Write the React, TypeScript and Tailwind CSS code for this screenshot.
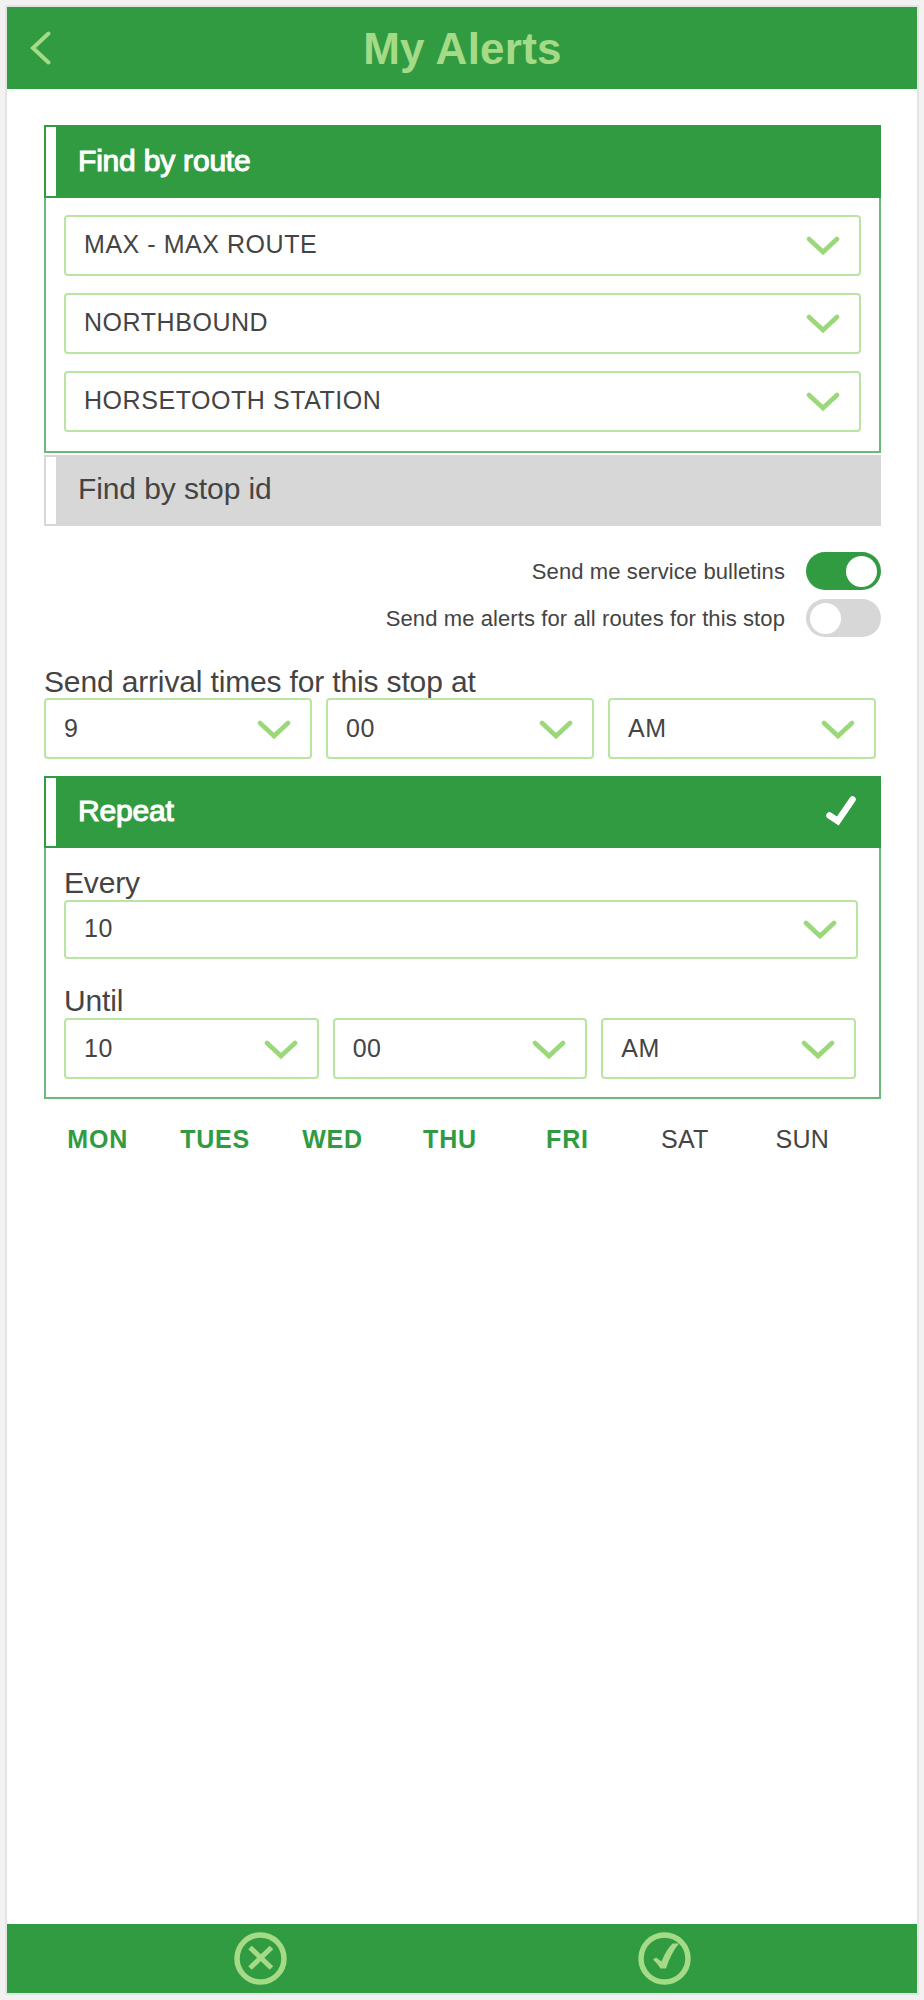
import React, { useState } from 'react';
import clsx from 'clsx';

const routeFilters = [
  { id: 'route', value: 'MAX - MAX ROUTE' },
  { id: 'direction', value: 'NORTHBOUND' },
  { id: 'stop', value: 'HORSETOOTH STATION' },
];

const arrivalTime = ['9', '00', 'AM'];
const untilTime = ['10', '00', 'AM'];

const days = ['MON', 'TUES', 'WED', 'THU', 'FRI', 'SAT', 'SUN'];

function SelectBox({ value, className = 'h-[61px] pb-[2px]' }: { value: string; className?: string }) {
  return (
    <button
      type="button"
      className={clsx(
        'flex w-full items-center justify-between rounded-[4px] border-2 border-[#b9e4a1] bg-white pl-[18px] pr-[19px] text-left',
        className
      )}
    >
      <span className="text-[25px] leading-[30px] tracking-[0.55px] text-[#444444]">{value}</span>
      <svg className="mt-[4px] h-[20px] w-[34px]" viewBox="0 0 34 20" fill="none">
        <path d="M3 3L17 16L31 3" stroke="#9bd87a" strokeWidth="4.6" strokeLinecap="round" />
      </svg>
    </button>
  );
}

function PanelHeader({ title, checked = false, className }: { title: string; checked?: boolean; className: string }) {
  return (
    <div className={clsx('flex border-2 border-[#319b42] bg-[#319b42]', className)}>
      <div className="w-[10px] bg-white" />
      <div className="flex flex-1 items-center justify-between pb-[2px] pl-[22px] pr-[22px]">
        <h2 className="text-[30px] leading-[36px] tracking-[-0.2px] text-white [-webkit-text-stroke:1.1px_white]">
          {title}
        </h2>
        {checked && (
          <svg className="h-[32px] w-[32px]" viewBox="0 0 32 32" fill="none">
            <path d="M4.5 20.5L12.8 26L27.5 4.5" stroke="white" strokeWidth="6.6" strokeLinecap="round" />
          </svg>
        )}
      </div>
    </div>
  );
}

function Toggle({ label, on, onChange }: { label: string; on: boolean; onChange: () => void }) {
  return (
    <div className="flex h-[38px] items-center justify-end gap-[21px]">
      <span className="pt-[2px] text-[22px] leading-[26px] tracking-[0.1px] text-[#444444]">{label}</span>
      <button
        type="button"
        role="switch"
        aria-checked={on}
        aria-label={label}
        onClick={onChange}
        className={clsx(
          'flex h-[38px] w-[75px] items-center rounded-full px-[4px]',
          on ? 'justify-end bg-[#319b42]' : 'justify-start bg-[#d7d7d7]'
        )}
      >
        <span className="h-[31px] w-[31px] rounded-full bg-white" />
      </button>
    </div>
  );
}

export default function App() {
  const [bulletins, setBulletins] = useState(true);
  const [allRoutes, setAllRoutes] = useState(false);
  const [selectedDays, setSelectedDays] = useState(['MON', 'TUES', 'WED', 'THU', 'FRI']);

  const toggleDay = (day: string) => {
    setSelectedDays((prev) => (prev.includes(day) ? prev.filter((d) => d !== day) : [...prev, day]));
  };

  return (
    <div className="h-[2000px] w-[924px] bg-[#f2f2f2] p-[7px] font-['Liberation_Sans',Arial,sans-serif]">
      <div className="flex h-[1986px] w-[910px] flex-col bg-white shadow-[0_0_0_2px_#e4e4e4]">
        {/* Header */}
        <header className="grid h-[82px] shrink-0 grid-cols-[60px_1fr_60px] items-center bg-[#319b42]">
          <button type="button" aria-label="Back" className="pl-[22px]">
            <svg className="h-[34px] w-[22px]" viewBox="0 0 22 34" fill="none">
              <path d="M19.5 2.5L4 17L19.5 31.5" stroke="#a5db86" strokeWidth="4" strokeLinecap="round" />
            </svg>
          </button>
          <h1 className="pl-px pt-px text-center text-[44px] font-bold leading-[50px] tracking-[0.25px] text-[#a5db86]">
            My Alerts
          </h1>
        </header>

        <main className="flex-1 pl-[37px] pr-[36px] pt-[36px]">
          {/* Find by route */}
          <section>
            <PanelHeader title="Find by route" className="h-[73px]" />
            <div className="flex flex-col gap-[17px] border-x-2 border-b-2 border-[#6cb87a] pb-[19px] pl-[18px] pr-[18px] pt-[17px]">
              {routeFilters.map((filter) => (
                <SelectBox key={filter.id} value={filter.value} className="h-[61px] pb-[3px]" />
              ))}
            </div>
          </section>

          {/* Find by stop id */}
          <div className="mt-[2px] flex h-[71px] border-2 border-[#d7d7d7] bg-[#d7d7d7]">
            <div className="w-[10px] bg-white" />
            <h2 className="flex items-center pb-[4px] pl-[22px] text-[30px] leading-[36px] tracking-[-0.1px] text-[#444444]">
              Find by stop id
            </h2>
          </div>

          {/* Notification switches */}
          <div className="mt-[26px] flex flex-col gap-[9px]">
            <Toggle label="Send me service bulletins" on={bulletins} onChange={() => setBulletins(!bulletins)} />
            <Toggle
              label="Send me alerts for all routes for this stop"
              on={allRoutes}
              onChange={() => setAllRoutes(!allRoutes)}
            />
          </div>

          {/* Arrival time */}
          <p className="mt-[28px] text-[30px] leading-[33px] tracking-[-0.15px] text-[#444444]">
            Send arrival times for this stop at
          </p>
          <div className="grid w-[832px] grid-cols-3 gap-[14px]">
            {arrivalTime.map((value) => (
              <SelectBox key={value} value={value} />
            ))}
          </div>

          {/* Repeat */}
          <section className="mt-[17px]">
            <PanelHeader title="Repeat" checked className="h-[72px]" />
            <div className="border-x-2 border-b-2 border-[#6cb87a] pb-[18px] pl-[18px] pt-[18px]">
              <p className="text-[30px] leading-[34px] tracking-[-0.15px] text-[#444444]">Every</p>
              <div className="w-[794px]">
                <SelectBox value="10" className="h-[59px] pb-[3px]" />
              </div>
              <p className="mt-[25px] text-[30px] leading-[34px] tracking-[-0.15px] text-[#444444]">Until</p>
              <div className="grid w-[792px] grid-cols-3 gap-[14px]">
                {untilTime.map((value) => (
                  <SelectBox key={value} value={value} />
                ))}
              </div>
            </div>
          </section>

          {/* Days of the week */}
          <div className="-ml-[5px] mt-[25px] grid w-[822px] grid-cols-7">
            {days.map((day) => (
              <button
                key={day}
                type="button"
                onClick={() => toggleDay(day)}
                className={clsx(
                  'text-center text-[25px] leading-[30px]',
                  selectedDays.includes(day) ? 'font-bold tracking-[0.8px] text-[#319b42]' : 'tracking-[0.3px] text-[#444444]'
                )}
              >
                {day}
              </button>
            ))}
          </div>
        </main>

        {/* Footer actions */}
        <footer className="flex h-[69px] shrink-0 items-center gap-[351px] bg-[#319b42] pb-px pl-[227px]">
          <button type="button" aria-label="Cancel">
            <svg className="h-[53px] w-[53px]" viewBox="0 0 53 53" fill="none" stroke="#a5db86">
              <circle cx="26.5" cy="26.5" r="23.5" strokeWidth="5.5" />
              <path d="M16 15.5L37.5 36M37.5 15.5L16 36" strokeWidth="5" />
            </svg>
          </button>
          <button type="button" aria-label="Save">
            <svg className="h-[53px] w-[53px]" viewBox="0 0 53 53" fill="none">
              <circle cx="26.5" cy="26.5" r="23.5" stroke="#a5db86" strokeWidth="5.5" />
              <path
                d="M15 27.5L18 25.5L23.5 29.5Q28 18 34.5 11.5H41Q33 21 28 36.5H22.5Q19.5 31.5 15 27.5Z"
                fill="#a5db86"
              />
            </svg>
          </button>
        </footer>
      </div>
    </div>
  );
}
